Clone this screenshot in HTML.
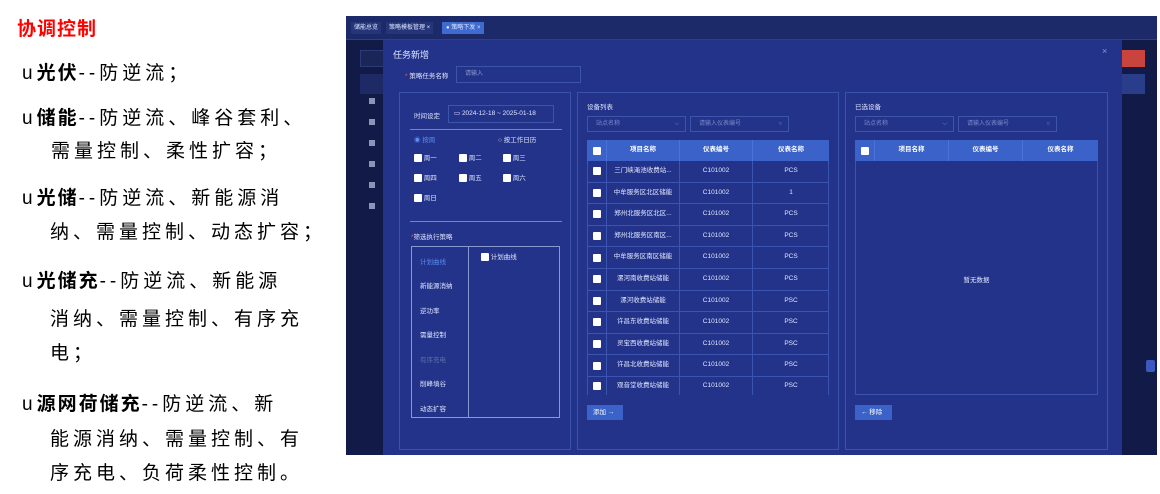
<!DOCTYPE html>
<html><head><meta charset="utf-8"><style>
*{margin:0;padding:0;box-sizing:border-box}
body{width:1160px;height:494px;background:#fff;position:relative;overflow:hidden;font-family:"Liberation Sans","Noto Sans CJK SC",sans-serif}
.t{position:absolute;font-size:19px;line-height:22px;letter-spacing:4px;color:#000;white-space:nowrap}
.t b{font-weight:bold;letter-spacing:2px}
.a{position:absolute;white-space:nowrap}
.sc{position:absolute;left:346px;top:16px;width:811px;height:439px;background:#121a48;overflow:hidden;font-size:7px;color:#dfe6ff}
.cb{display:inline-block;width:8px;height:8px;background:#fff;border-radius:1px;vertical-align:middle}
.row{position:absolute;left:587px;width:242px;height:21.6px;border-bottom:1px solid #3a54b0;display:flex;align-items:stretch;font-size:6.5px;color:#dfe6ff;white-space:nowrap}
.row div{display:flex;align-items:center;justify-content:center;border-right:1px solid #3a54b0;overflow:hidden;white-space:nowrap;line-height:1}
</style></head><body>
<div class="t" style="left:17px;top:19px;color:#f00;font-weight:bold;letter-spacing:1px">协调控制</div>
<div class="t" style="left:22px;top:63px">u<b>光伏</b>--防逆流；</div>
<div class="t" style="left:22px;top:108px">u<b>储能</b>--防逆流、峰谷套利、</div>
<div class="t" style="left:51px;top:141px">需量控制、柔性扩容；</div>
<div class="t" style="left:22px;top:188px">u<b>光储</b>--防逆流、新能源消</div>
<div class="t" style="left:50px;top:222px">纳、需量控制、动态扩容；</div>
<div class="t" style="left:22px;top:271px">u<b>光储充</b>--防逆流、新能源</div>
<div class="t" style="left:50px;top:309px">消纳、需量控制、有序充</div>
<div class="t" style="left:50px;top:343px">电；</div>
<div class="t" style="left:22px;top:394px">u<b>源网荷储充</b>--防逆流、新</div>
<div class="t" style="left:50px;top:429px">能源消纳、需量控制、有</div>
<div class="t" style="left:50px;top:463px">序充电、负荷柔性控制。</div>

<div class="sc">
 <div class="a" style="left:0;top:0;width:811px;height:24px;background:#1c2a6a;border-bottom:1px solid #2d3f8a"></div>
 <div class="a" style="left:5px;top:6px;height:12px;padding:0 3px;background:#25357a;font-size:6px;line-height:12px">储能总览</div>
 <div class="a" style="left:40px;top:6px;height:12px;padding:0 3px;background:#25357a;font-size:6px;line-height:12px">策略模板管理 ×</div>
 <div class="a" style="left:96px;top:6px;height:12px;padding:0 4px;background:#3f6ad0;font-size:6px;line-height:12px">● 策略下发 ×</div>
 <div class="a" style="left:14px;top:34px;width:30px;height:17px;border:1px solid #2a3a7a;background:#1a2558"></div>
 <div class="a" style="left:14px;top:58px;width:30px;height:20px;background:#1d2a66"></div>
 <div class="a" style="left:776px;top:34px;width:23px;height:17px;background:#c9443c"></div>
 <div class="a" style="left:776px;top:58px;width:23px;height:20px;background:#2a3d8a"></div>
 <div class="a" style="left:800px;top:344px;width:9px;height:12px;background:#3a58c0;border-radius:2px"></div>
</div>
<div class="a" style="left:369px;top:98px;width:6px;height:6px;background:#8a93b8"></div>
<div class="a" style="left:369px;top:119px;width:6px;height:6px;background:#8a93b8"></div>
<div class="a" style="left:369px;top:140px;width:6px;height:6px;background:#8a93b8"></div>
<div class="a" style="left:369px;top:161px;width:6px;height:6px;background:#8a93b8"></div>
<div class="a" style="left:369px;top:182px;width:6px;height:6px;background:#8a93b8"></div>
<div class="a" style="left:369px;top:203px;width:6px;height:6px;background:#8a93b8"></div>

<!-- modal -->
<div class="a" style="left:383px;top:40px;width:739px;height:415px;background:#24338a;color:#dfe6ff;font-size:7px">
 <div class="a" style="left:10px;top:8px;font-size:9px">任务新增</div>
 <div class="a" style="left:719px;top:6px;font-size:9px;color:#8a9ad0">×</div>
 <div class="a" style="left:22px;top:30px;font-size:6.5px"><span style="color:#f55">*</span> 策略任务名称</div>
 <div class="a" style="left:73px;top:26px;width:125px;height:17px;border:1px solid #3d55a8;font-size:6px;color:#8a9ad0;line-height:15px;padding-left:8px">请输入</div>
</div>
<!-- left panel -->
<div class="a" style="left:399px;top:92px;width:172px;height:358px;border:1px solid #3a52a8;color:#dfe6ff;font-size:6.5px">
 <div class="a" style="left:14px;top:17px">时间设定</div>
 <div class="a" style="left:48px;top:12px;width:106px;height:18px;border:1px solid #3d55a8;line-height:16px;padding-left:5px;font-size:6.5px">▭ 2024-12-18 ~ 2025-01-18</div>
 <div class="a" style="left:10px;top:36px;width:152px;height:1px;background:#6a86d8"></div>
 <div class="a" style="left:14px;top:41px;color:#5a8ef0">◉ 按周</div>
 <div class="a" style="left:98px;top:41px">○ 按工作日历</div>
 <div class="a" style="left:14px;top:59px"><span class="cb"></span> 周一</div>
 <div class="a" style="left:59px;top:59px"><span class="cb"></span> 周二</div>
 <div class="a" style="left:103px;top:59px"><span class="cb"></span> 周三</div>
 <div class="a" style="left:14px;top:79px"><span class="cb"></span> 周四</div>
 <div class="a" style="left:59px;top:79px"><span class="cb"></span> 周五</div>
 <div class="a" style="left:103px;top:79px"><span class="cb"></span> 周六</div>
 <div class="a" style="left:14px;top:99px"><span class="cb"></span> 周日</div>
 <div class="a" style="left:10px;top:128px;width:152px;height:1px;background:#6a86d8"></div>
 <div class="a" style="left:11px;top:138px"><span style="color:#f55">*</span>筛选执行策略</div>
 <div class="a" style="left:11px;top:153px;width:149px;height:172px;border:1px solid #8a9ad0"></div>
 <div class="a" style="left:68px;top:153px;width:1px;height:172px;background:#8a9ad0"></div>
 <div class="a" style="left:20px;top:163px;color:#5a8ef0">计划曲线</div>
 <div class="a" style="left:20px;top:187px">新能源消纳</div>
 <div class="a" style="left:20px;top:212px">逆功率</div>
 <div class="a" style="left:20px;top:236px">需量控制</div>
 <div class="a" style="left:20px;top:261px;color:#6070a8">有序充电</div>
 <div class="a" style="left:20px;top:285px">削峰填谷</div>
 <div class="a" style="left:20px;top:310px">动态扩容</div>
 <div class="a" style="left:81px;top:158px"><span class="cb"></span> 计划曲线</div>
</div>
<!-- middle panel -->
<div class="a" style="left:577px;top:92px;width:262px;height:358px;border:1px solid #3a52a8"></div>
<div class="a" style="left:587px;top:101px;font-size:6.5px;color:#dfe6ff">设备列表</div>
<div class="a" style="left:587px;top:116px;width:99px;height:16px;border:1px solid #3d55a8;font-size:6px;color:#7a8ac8;line-height:14px;padding-left:8px">站点名称<span style="float:right;margin-right:6px">⌵</span></div>
<div class="a" style="left:690px;top:116px;width:99px;height:16px;border:1px solid #3d55a8;font-size:6px;color:#7a8ac8;line-height:14px;padding-left:8px">请输入仪表编号<span style="float:right;margin-right:6px">○</span></div>
<div class="a" style="left:587px;top:140px;width:242px;height:21px;background:#3a62c8"></div>
<div class="row" style="top:140px;height:21px;color:#fff;font-weight:bold;border:none"><div style="width:20px;border-color:#4a72d8"><span class="cb"></span></div><div style="width:73px;border-color:#4a72d8">项目名称</div><div style="width:73px;border-color:#4a72d8">仪表编号</div><div style="width:76px;border:none">仪表名称</div></div>
<div class="a" style="left:587px;top:161px;width:242px;height:234px;border-left:1px solid #3a54b0;border-right:1px solid #3a54b0"></div>
<div class="row" style="top:161px"><div style="width:20px"><span class="cb"></span></div><div style="width:73px">三门峡渑池收费站...</div><div style="width:73px">C101002</div><div style="width:76px;border:none">PCS</div></div>
<div class="row" style="top:182.6px"><div style="width:20px"><span class="cb"></span></div><div style="width:73px">中牟服务区北区储能</div><div style="width:73px">C101002</div><div style="width:76px;border:none">1</div></div>
<div class="row" style="top:204.2px"><div style="width:20px"><span class="cb"></span></div><div style="width:73px">郑州北服务区北区...</div><div style="width:73px">C101002</div><div style="width:76px;border:none">PCS</div></div>
<div class="row" style="top:225.8px"><div style="width:20px"><span class="cb"></span></div><div style="width:73px">郑州北服务区南区...</div><div style="width:73px">C101002</div><div style="width:76px;border:none">PCS</div></div>
<div class="row" style="top:247.4px"><div style="width:20px"><span class="cb"></span></div><div style="width:73px">中牟服务区南区储能</div><div style="width:73px">C101002</div><div style="width:76px;border:none">PCS</div></div>
<div class="row" style="top:269px"><div style="width:20px"><span class="cb"></span></div><div style="width:73px">漯河南收费站储能</div><div style="width:73px">C101002</div><div style="width:76px;border:none">PCS</div></div>
<div class="row" style="top:290.6px"><div style="width:20px"><span class="cb"></span></div><div style="width:73px">漯河收费站储能</div><div style="width:73px">C101002</div><div style="width:76px;border:none">PSC</div></div>
<div class="row" style="top:312.2px"><div style="width:20px"><span class="cb"></span></div><div style="width:73px">许昌东收费站储能</div><div style="width:73px">C101002</div><div style="width:76px;border:none">PSC</div></div>
<div class="row" style="top:333.8px"><div style="width:20px"><span class="cb"></span></div><div style="width:73px">灵宝西收费站储能</div><div style="width:73px">C101002</div><div style="width:76px;border:none">PSC</div></div>
<div class="row" style="top:355.4px"><div style="width:20px"><span class="cb"></span></div><div style="width:73px">许昌北收费站储能</div><div style="width:73px">C101002</div><div style="width:76px;border:none">PSC</div></div>
<div class="row" style="top:377px;height:18px;border:none"><div style="width:20px"><span class="cb"></span></div><div style="width:73px">观音堂收费站储能</div><div style="width:73px">C101002</div><div style="width:76px;border:none">PSC</div></div>
<div class="a" style="left:587px;top:405px;width:36px;height:15px;background:#3a62c8;font-size:6.5px;color:#fff;line-height:15px;padding-left:6px">添加 →</div>
<!-- right panel -->
<div class="a" style="left:845px;top:92px;width:263px;height:358px;border:1px solid #3a52a8"></div>
<div class="a" style="left:855px;top:101px;font-size:6.5px;color:#dfe6ff">已选设备</div>
<div class="a" style="left:855px;top:116px;width:99px;height:16px;border:1px solid #3d55a8;font-size:6px;color:#7a8ac8;line-height:14px;padding-left:8px">站点名称<span style="float:right;margin-right:6px">⌵</span></div>
<div class="a" style="left:958px;top:116px;width:99px;height:16px;border:1px solid #3d55a8;font-size:6px;color:#7a8ac8;line-height:14px;padding-left:8px">请输入仪表编号<span style="float:right;margin-right:6px">○</span></div>
<div class="a" style="left:855px;top:140px;width:243px;height:21px;background:#3a62c8"></div>
<div class="row" style="left:855px;top:140px;width:243px;height:21px;color:#fff;font-weight:bold;border:none"><div style="width:20px;border-color:#4a72d8"><span class="cb"></span></div><div style="width:74px;border-color:#4a72d8">项目名称</div><div style="width:74px;border-color:#4a72d8">仪表编号</div><div style="width:75px;border:none">仪表名称</div></div>
<div class="a" style="left:855px;top:161px;width:243px;height:234px;border:1px solid #3a54b0;border-top:none"></div>
<div class="a" style="left:855px;top:274px;width:243px;text-align:center;font-size:6.5px;color:#dfe6ff">暂无数据</div>
<div class="a" style="left:855px;top:405px;width:37px;height:15px;background:#3a62c8;font-size:6.5px;color:#fff;line-height:15px;padding-left:6px">← 移除</div>
</body></html>
